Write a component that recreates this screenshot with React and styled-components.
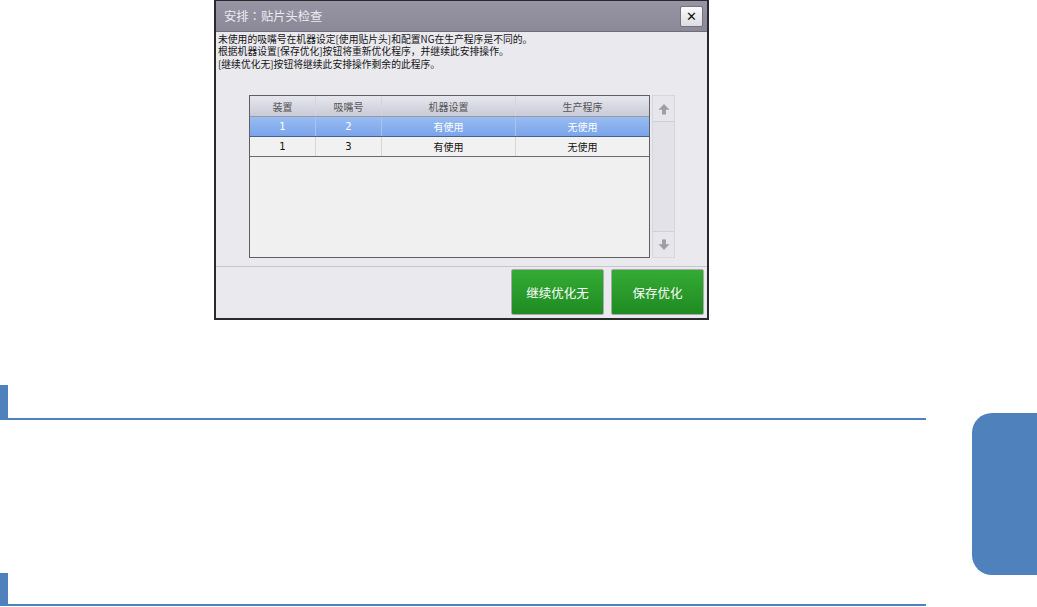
import styled, { createGlobalStyle } from 'styled-components';

const GlobalStyle = createGlobalStyle`
  html, body {
    margin: 0;
    padding: 0;
    background: #ffffff;
    overflow: hidden;
  }
  body {
    font-family: "DejaVu Sans", "Noto Sans CJK SC", sans-serif;
  }
`;

const Page = styled.div`
  display: flex;
  width: 1037px;
  height: 607px;
`;

const MainColumn = styled.div`
  display: flex;
  flex-direction: column;
  width: 926px;
`;

const Dialog = styled.div`
  box-sizing: border-box;
  width: 495px;
  height: 320px;
  margin-left: 214px;
  border: 2px solid #2a2a2e;
  border-top-width: 1px;
  background: #e9e9ee;
  display: flex;
  flex-direction: column;
`;

const TitleBar = styled.div`
  height: 30px;
  display: flex;
  align-items: center;
  justify-content: space-between;
  padding: 0 4px 0 8px;
  background: linear-gradient(#9794a3, #8b8898);
  border-bottom: 1px solid #6f6c7a;
`;

const Title = styled.span`
  font-family: "Noto Sans CJK SC", sans-serif;
  font-size: 12.3px;
  color: #ecebf2;
`;

const Colon = styled.span`
  font-family: "Noto Sans CJK JP", sans-serif;
`;

const CloseButton = styled.button`
  box-sizing: border-box;
  width: 23px;
  height: 21px;
  padding: 0;
  display: flex;
  align-items: center;
  justify-content: center;
  border: 1px solid #76737f;
  border-radius: 2px;
  background: linear-gradient(#fbfbfc, #dcdce2);
  color: #111;
  font-family: "DejaVu Sans", sans-serif;
  font-size: 13px;
  font-weight: bold;
  line-height: 1;
`;

const Message = styled.div`
  height: 62px;
  padding: 1px 0 0 2px;
  font-family: "Noto Sans CJK SC", sans-serif;
  font-size: 9.8px;
  line-height: 12.4px;
  color: #151515;
`;

const TableRow = styled.div`
  display: flex;
  gap: 2px;
  margin-left: 33px;
`;

const Table = styled.div`
  box-sizing: border-box;
  width: 401px;
  height: 163px;
  border: 1px solid #5e5e64;
  background: #f0f0f0;
  display: flex;
  flex-direction: column;
`;

const Grid = styled.div`
  display: grid;
  grid-template-columns: 66px 66px 134px 1fr;
  height: ${p => p.$h}px;
  background: ${p => p.$bg};
  color: ${p => p.$color};
  border-bottom: 1px solid ${p => p.$line};
  box-sizing: border-box;
`;

const Cell = styled.div`
  display: flex;
  align-items: center;
  justify-content: center;
  font-family: "DejaVu Sans", "Noto Sans CJK SC", sans-serif;
  font-size: 10px;
  border-right: 1px solid ${p => p.$line};
  &:last-child {
    border-right: none;
  }
`;

const ScrollBar = styled.div`
  box-sizing: border-box;
  width: 23px;
  height: 163px;
  background: #e2e2e8;
  border: 1px solid #d6d6dc;
  display: flex;
  flex-direction: column;
  justify-content: space-between;
`;

const ScrollButton = styled.div`
  height: 25px;
  display: flex;
  align-items: center;
  justify-content: center;
  background: #e6e6ec;
  border-${p => (p.$up ? 'bottom' : 'top')}: 1px solid #cfcfd6;
`;

const Footer = styled.div`
  margin-top: 8px;
  border-top: 1px solid #c6c6cd;
  display: flex;
  justify-content: flex-end;
  gap: 7px;
  padding: 2px 3px 0 0;
`;

const GreenButton = styled.button`
  box-sizing: border-box;
  width: 93px;
  height: 46px;
  border: 1px solid #a7aaa7;
  border-radius: 2px;
  background: linear-gradient(#35ab35, #1f8b22);
  color: #ffffff;
  font-family: "Noto Sans CJK SC", sans-serif;
  font-size: 12.5px;
`;

const SectionHead = styled.div`
  height: ${p => p.$h}px;
  margin-top: ${p => p.$top}px;
  border-bottom: 2px solid #4f81bd;
  display: flex;
  &::before {
    content: '';
    width: 8px;
    background: #4f81bd;
  }
`;

const Aside = styled.div`
  margin-left: 46px;
  padding-top: 413px;
`;

const ThumbTab = styled.div`
  width: 65px;
  height: 162px;
  background: #4f81bd;
  border-radius: 20px 0 0 20px;
`;

const Arrow = ({ up }) => (
  <svg width="12" height="12" viewBox="0 0 12 12" style={{ transform: up ? 'none' : 'rotate(180deg)' }}>
    <path d="M6 1 L11.5 6.8 L8 6.8 L8 11.5 L4 11.5 L4 6.8 L0.5 6.8 Z" fill="#9e9ea6" />
  </svg>
);

const rows = [
  { dev: '1', nozzle: '2', machine: '有使用', program: '无使用', selected: true },
  { dev: '1', nozzle: '3', machine: '有使用', program: '无使用', selected: false },
];

export default function App() {
  return (
    <>
      <GlobalStyle />
      <Page>
        <MainColumn>
          <Dialog>
            <TitleBar>
              <Title>安排<Colon>：</Colon>贴片头检查</Title>
              <CloseButton>✕</CloseButton>
            </TitleBar>
            <Message>
              未使用的吸嘴号在机器设定[使用贴片头]和配置NG在生产程序是不同的。<br />
              根据机器设置[保存优化]按钮将重新优化程序，并继续此安排操作。<br />
              [继续优化无]按钮将继续此安排操作剩余的此程序。
            </Message>
            <TableRow>
              <Table>
                <Grid $h={21} $bg="linear-gradient(#e6e7ee, #c8cad6)" $color="#555" $line="#9a9aa6">
                  {['装置', '吸嘴号', '机器设置', '生产程序'].map(h => (
                    <Cell key={h} $line="#d4d5de">{h}</Cell>
                  ))}
                </Grid>
                {rows.map((r, i) => (
                  <Grid
                    key={i}
                    $h={20}
                    $bg={r.selected ? 'linear-gradient(#98bcf2, #7ba4ea)' : '#f1f1f1'}
                    $color={r.selected ? '#ffffff' : '#111'}
                    $line={r.selected ? '#4a5f8a' : '#6a6a70'}
                  >
                    {[r.dev, r.nozzle, r.machine, r.program].map((v, j) => (
                      <Cell key={j} $line={r.selected ? '#a7c3ee' : '#d6d6da'}>{v}</Cell>
                    ))}
                  </Grid>
                ))}
              </Table>
              <ScrollBar>
                <ScrollButton $up>
                  <Arrow up />
                </ScrollButton>
                <ScrollButton>
                  <Arrow />
                </ScrollButton>
              </ScrollBar>
            </TableRow>
            <Footer>
              <GreenButton>继续优化无</GreenButton>
              <GreenButton>保存优化</GreenButton>
            </Footer>
          </Dialog>
          <SectionHead $top={65} $h={33} />
          <SectionHead $top={153} $h={31} />
        </MainColumn>
        <Aside>
          <ThumbTab />
        </Aside>
      </Page>
    </>
  );
}
